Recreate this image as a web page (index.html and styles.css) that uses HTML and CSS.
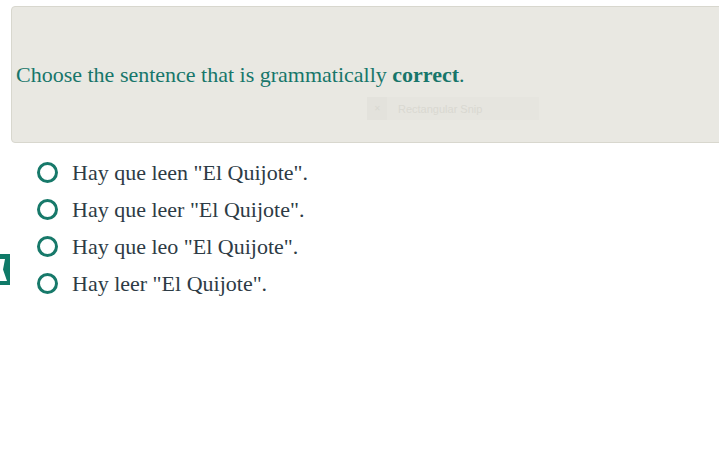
FILE: index.html
```html
<!DOCTYPE html>
<html>
<head>
<meta charset="utf-8">
<link rel="stylesheet" href="styles.css">
</head>
<body>
<div class="question">
  <p class="prompt">Choose the sentence that is grammatically <strong>correct</strong>.</p>
  <div class="snip"><span class="snip-icon">✕</span><span class="snip-text">Rectangular Snip</span></div>
</div>
<div class="body">
  <div class="tab"><svg width="10" height="31" viewBox="0 0 10 31"><rect width="10" height="31" fill="#0f7a68"/><polygon points="0,5 5,5 3,15.5 7,27 0,27" fill="#ffffff"/></svg></div>
  <ul class="options">
    <li class="option"><span class="radio"></span><span class="label">Hay que leen "El Quijote".</span></li>
    <li class="option"><span class="radio"></span><span class="label">Hay que leer "El Quijote".</span></li>
    <li class="option"><span class="radio"></span><span class="label">Hay que leo "El Quijote".</span></li>
    <li class="option"><span class="radio"></span><span class="label">Hay leer "El Quijote".</span></li>
  </ul>
</div>
</body>
</html>
```
FILE: styles.css
```css
html, body {
  margin: 0;
  padding: 0;
  background: #ffffff;
  overflow: hidden;
}
body {
  font-family: "Liberation Serif", "Times New Roman", serif;
  width: 719px;
  height: 468px;
}
.question {
  position: relative;
  margin: 6px 0 0 11px;
  width: 740px;
  height: 135px;
  box-sizing: content-box;
  background: #e9e8e2;
  border: 1px solid #d8d7ce;
  border-radius: 4px;
  display: flex;
  align-items: center;
}
.prompt {
  margin: 0 0 0 4px;
  font-size: 22px;
  color: #17766a;
}
.prompt strong {
  font-weight: bold;
}
.snip {
  position: absolute;
  left: 355px;
  top: 90px;
  width: 172px;
  height: 23px;
  background: #e6e5df;
  display: flex;
  align-items: center;
  font-family: "Liberation Sans", Arial, sans-serif;
  font-size: 11px;
  color: #d9d8d1;
}
.snip-icon {
  width: 20px;
  height: 23px;
  display: flex;
  align-items: center;
  justify-content: center;
  background: #e3e2dc;
  font-size: 8px;
  margin-right: 11px;
}
.body {
  position: relative;
}
.tab {
  position: absolute;
  left: 0;
  top: 111px;
  width: 10px;
  height: 31px;
  line-height: 0;
}
.options {
  list-style: none;
  margin: 0;
  padding: 11px 0 0 37px;
  display: flex;
  flex-direction: column;
  gap: 0;
}
.option {
  display: flex;
  align-items: center;
  height: 37px;
}
.radio {
  width: 21px;
  height: 21px;
  box-sizing: border-box;
  border: 3px solid #17796a;
  border-radius: 50%;
  margin-right: 14px;
  flex: none;
}
.label {
  font-size: 22px;
  color: #2d3b45;
}
```
